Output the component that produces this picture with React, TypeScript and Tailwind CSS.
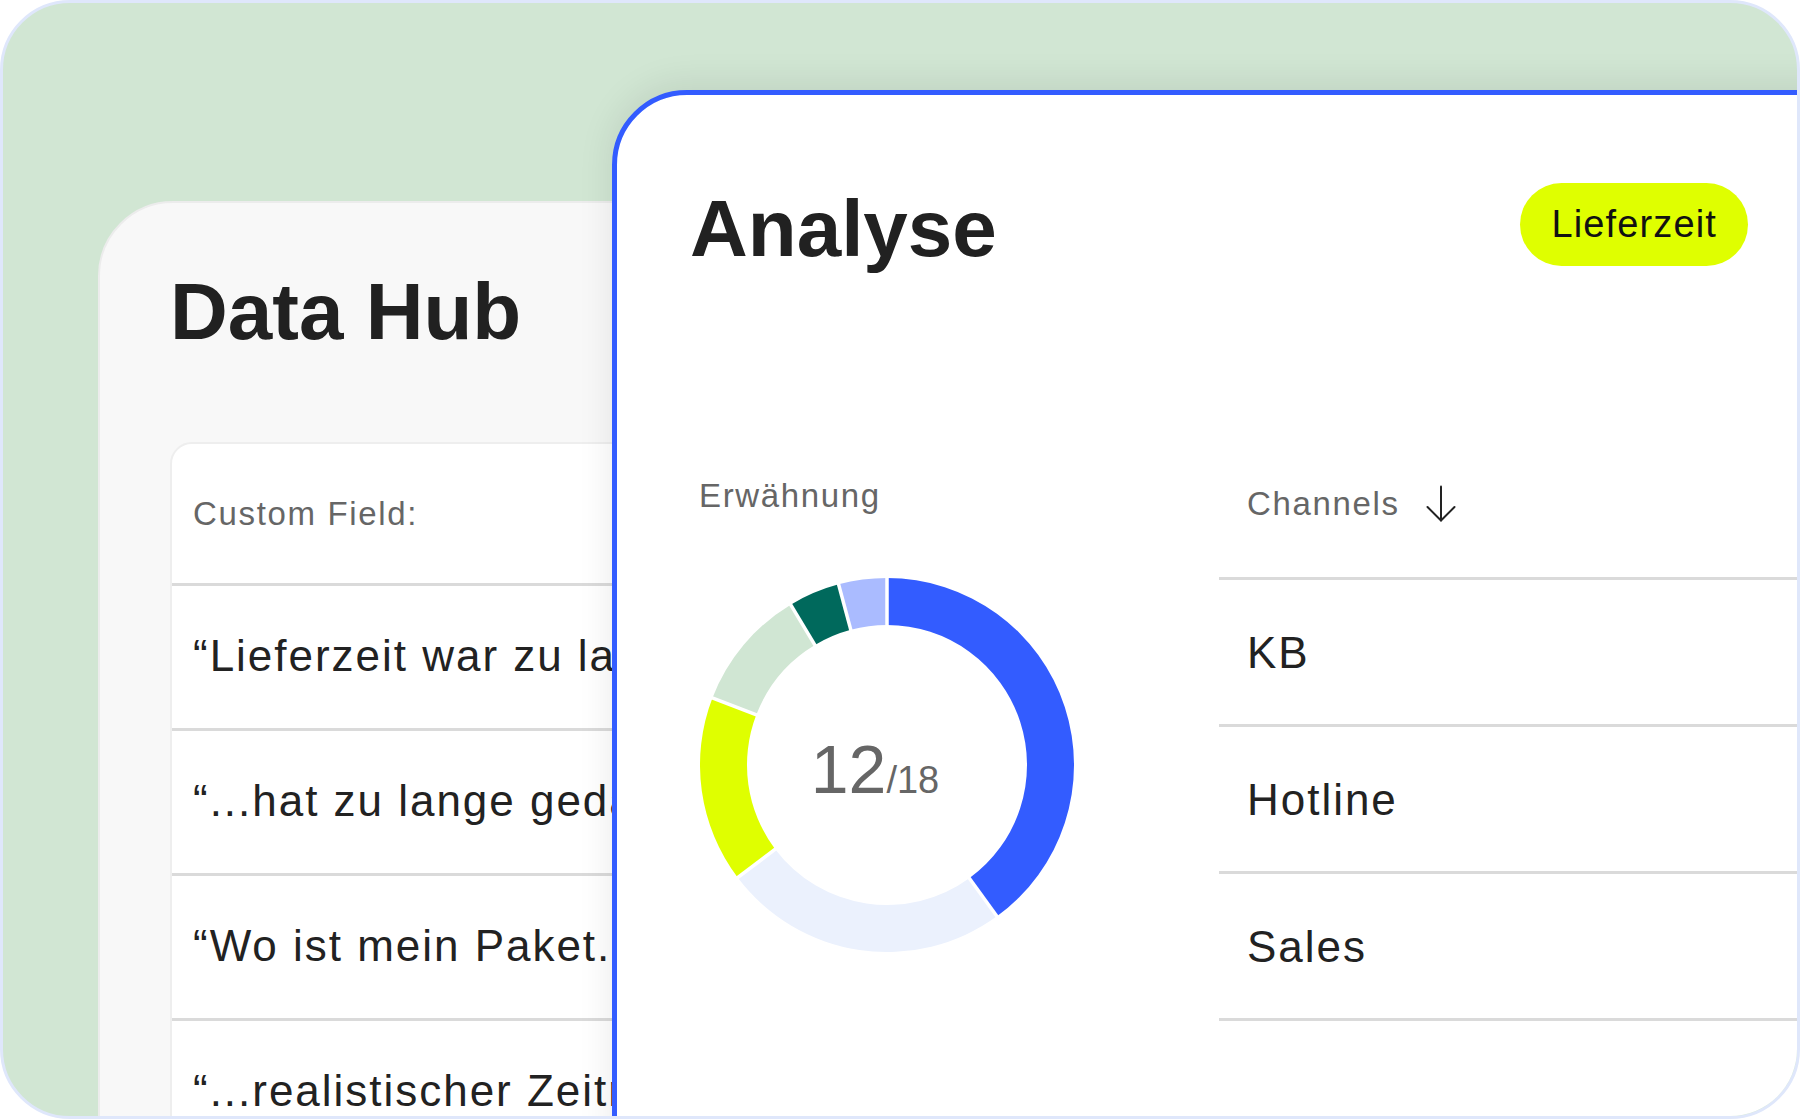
import React from 'react';

// ring geometry for the mention donut
const SIZE = 374;
const C = SIZE / 2;
const R_OUT = 187;
const R_IN = 140;

type Slice = { from: number; to: number; color: string };

const slices: Slice[] = [
  { from: 0, to: 144, color: '#335cff' },
  { from: 144, to: 233, color: '#ebf1fd' },
  { from: 233, to: 291, color: '#dfff00' },
  { from: 291, to: 329, color: '#d0e6d3' },
  { from: 329, to: 345, color: '#00695c' },
  { from: 345, to: 360, color: '#aabbff' },
];

const polar = (r: number, deg: number) => {
  const a = ((deg - 90) * Math.PI) / 180;
  return [C + r * Math.cos(a), C + r * Math.sin(a)];
};

const arcPath = (from: number, to: number) => {
  const [x1, y1] = polar(R_OUT, from);
  const [x2, y2] = polar(R_OUT, to - 0.001);
  const [x3, y3] = polar(R_IN, to - 0.001);
  const [x4, y4] = polar(R_IN, from);
  const large = to - from > 180 ? 1 : 0;
  return `M${x1} ${y1} A${R_OUT} ${R_OUT} 0 ${large} 1 ${x2} ${y2} L${x3} ${y3} A${R_IN} ${R_IN} 0 ${large} 0 ${x4} ${y4} Z`;
};

const Donut = () => (
  <div className="relative w-[374px] h-[374px] ml-px">
    <svg width={SIZE} height={SIZE} viewBox={`0 0 ${SIZE} ${SIZE}`}>
      {slices.map((s) => (
        <path key={s.from} d={arcPath(s.from, s.to)} fill={s.color} />
      ))}
      {slices.map((s) => {
        const [x1, y1] = polar(R_IN - 3, s.from);
        const [x2, y2] = polar(R_OUT + 3, s.from);
        return <line key={`gap-${s.from}`} x1={x1} y1={y1} x2={x2} y2={y2} stroke="#ffffff" strokeWidth={3.5} />;
      })}
    </svg>
    <div className="absolute inset-0 flex items-center justify-center">
      <div className="flex items-baseline text-[#666666] -translate-x-3 translate-y-[4px]">
        <span className="text-[68px] leading-none">12</span>
        <span className="text-[38px] leading-none">/18</span>
      </div>
    </div>
  </div>
);

const ArrowDownIcon = () => (
  <svg width="30" height="38" viewBox="0 0 30 38" fill="none" stroke="#222222" strokeWidth="2" strokeLinecap="round" strokeLinejoin="round" className="ml-[26px]">
    <path d="M15 1.5V35.5" />
    <path d="M1.5 22L15 35.5L28.5 22" />
  </svg>
);

const quotes = [
  '“Lieferzeit war zu lang.”',
  '“...hat zu lange gedauert.”',
  '“Wo ist mein Paket...?”',
  '“...realistischer Zeitrahmen.”',
];

const channels = ['KB', 'Hotline', 'Sales'];

const DataHub = () => (
  <div className="absolute left-[95px] top-[198px] w-[820px] h-[1000px] rounded-tl-[75px] rounded-tr-[75px] border-2 border-[#ececec] bg-[#f8f8f8]">
    <h2 className="pt-[69px] pl-[70px] text-[80px] leading-none font-bold text-[#212121]">Data Hub</h2>
    <div className="ml-[70px] mt-[90px] rounded-tl-[22px] border-2 border-[#eeeeee] bg-white">
      <div className="h-[142px] flex items-center pl-[21px] border-b-[3px] border-[#dadada]">
        <span className="text-[33px] leading-[40px] tracking-[0.05em] text-[#666666]">Custom Field:</span>
      </div>
      {quotes.map((q) => (
        <div key={q} className="h-[145px] flex items-center pl-[21px] border-b-[3px] border-[#dadada]">
          <span className="text-[44px] leading-[53px] tracking-[0.045em] text-[#222222] whitespace-nowrap -translate-y-[2px]">{q}</span>
        </div>
      ))}
    </div>
  </div>
);

const Analyse = () => (
  <div className="absolute left-[609px] top-[87px] w-[1220px] h-[1100px] rounded-tl-[75px] border-[5px] border-[#335cff] bg-white shadow-[0_-6px_36px_rgba(0,0,0,0.09)]">
    <div className="flex items-start justify-between pt-[94px] pl-[73px] pr-[79px]">
      <h2 className="text-[80px] leading-none font-bold text-[#212121]">Analyse</h2>
      <div className="-mt-[6px] h-[83px] px-[31px] rounded-full bg-[#dfff00] flex items-center">
        <span className="text-[38px] tracking-[0.03em] text-[#111111]">Lieferzeit</span>
      </div>
    </div>

    <div className="flex mt-[207px] pl-[82px]">
      <div className="w-[520px] shrink-0">
        <div className="text-[33px] leading-[40px] tracking-[0.05em] text-[#666666]">Erwähnung</div>
        <div className="mt-[62px]">
          <Donut />
        </div>
      </div>

      <div className="flex-1 pt-[8px]">
        <div className="flex items-center pl-[28px] pb-[53px] border-b-[3px] border-[#dadada]">
          <span className="text-[33px] leading-[40px] tracking-[0.05em] text-[#666666]">Channels</span>
          <ArrowDownIcon />
        </div>
        {channels.map((c) => (
          <div key={c} className="h-[147px] flex items-center pl-[28px] border-b-[3px] border-[#dadada]">
            <span className="text-[44px] leading-[53px] tracking-[0.045em] text-[#222222]">{c}</span>
          </div>
        ))}
      </div>
    </div>
  </div>
);

export default function App() {
  return (
    <div className="w-[1800px] h-[1119px] bg-white font-['Liberation_Sans',Arial,sans-serif]">
      <div className="relative w-full h-full overflow-hidden rounded-[70px] border-[3px] border-[#dfe7fb] bg-[#d1e6d3]">
        <DataHub />
        <Analyse />
      </div>
    </div>
  );
}
